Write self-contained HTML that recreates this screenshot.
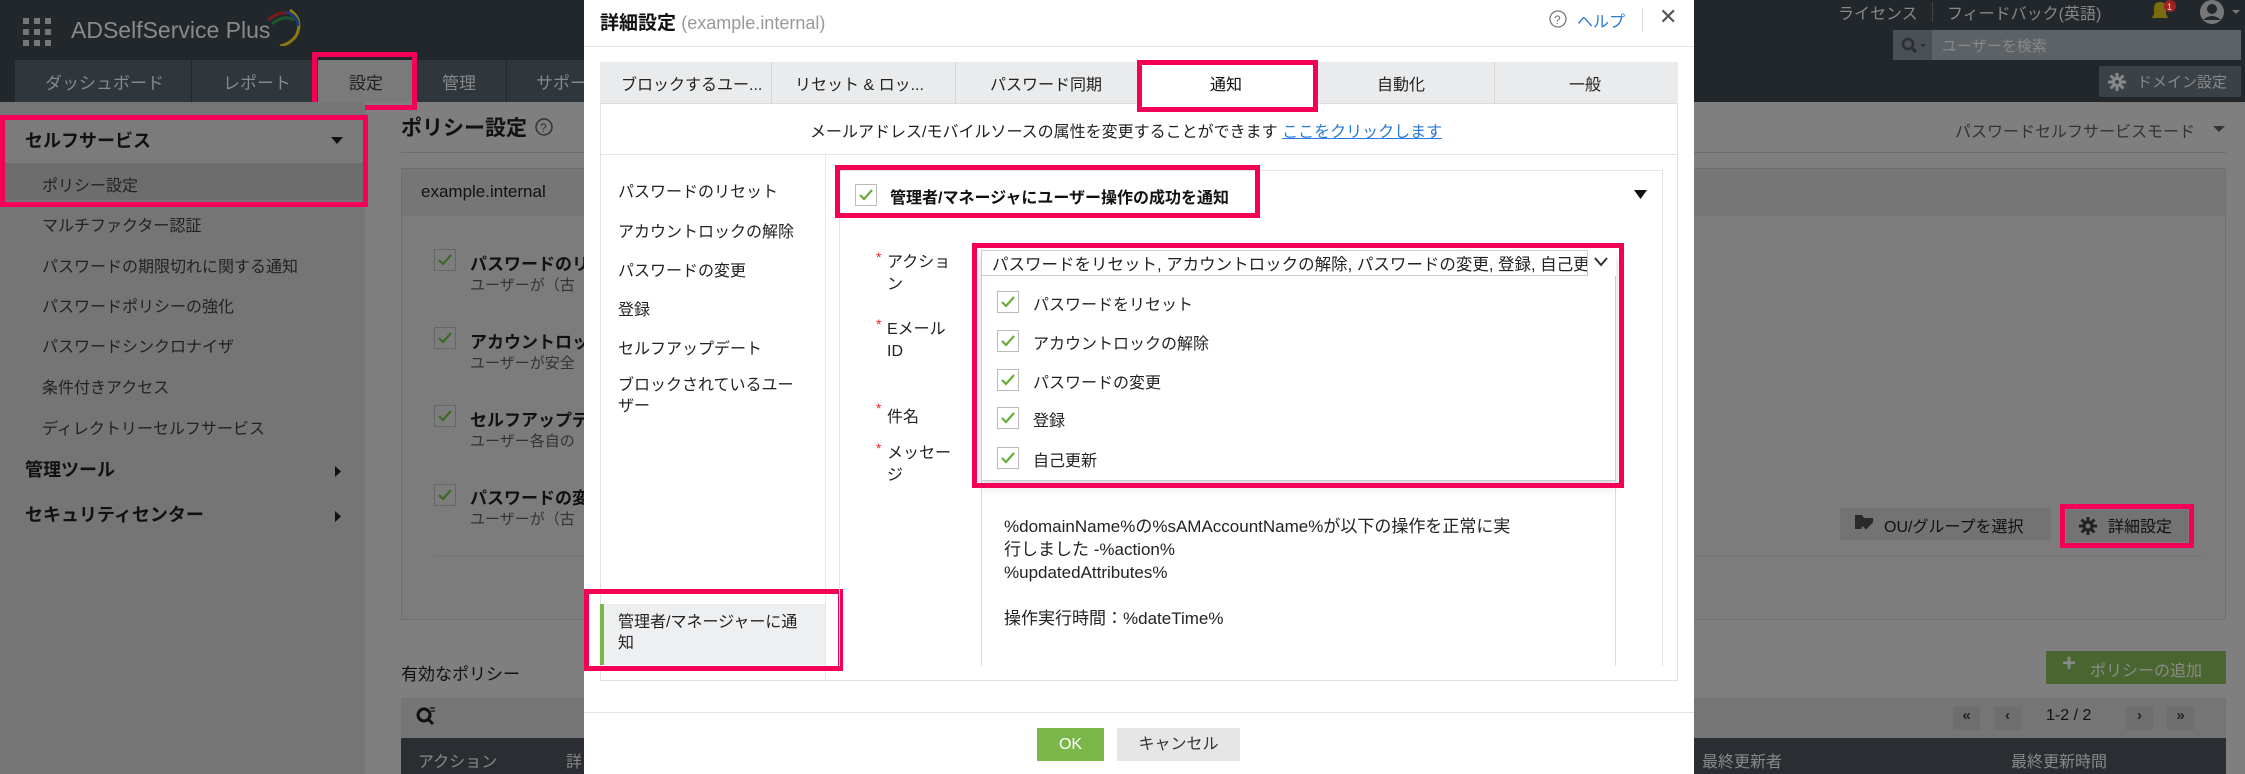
<!DOCTYPE html>
<html><head><meta charset="utf-8"><style>
*{box-sizing:border-box;margin:0;padding:0}
body{width:2245px;height:774px;overflow:hidden;position:relative;background:#7f7f7f;font-family:"Liberation Sans","Noto Sans CJK JP",sans-serif;color:#111}
.a{position:absolute;white-space:nowrap}
.pk{position:absolute;border:5px solid #f50057}
.cb{position:absolute;width:22px;height:22px;border:1.5px solid #bbb;background:#fff}
.cb svg{position:absolute;left:2px;top:2px}
.cbd{position:absolute;width:22px;height:22px;border:1.5px solid #666;background:#7d7d7d}
.cbd svg{position:absolute;left:2px;top:2px}
</style></head><body>
<!-- header -->
<div class="a" style="left:0;top:0;width:2245px;height:102px;background:#22272c"></div>
<svg class="a" style="left:23px;top:18px" width="28" height="28"><g fill="#777"><rect x="0" y="0" width="6" height="6"/><rect x="11" y="0" width="6" height="6"/><rect x="22" y="0" width="6" height="6"/><rect x="0" y="11" width="6" height="6"/><rect x="11" y="11" width="6" height="6"/><rect x="22" y="11" width="6" height="6"/><rect x="0" y="22" width="6" height="6"/><rect x="11" y="22" width="6" height="6"/><rect x="22" y="22" width="6" height="6"/></g></svg>
<div class="a" style="left:71px;top:17px;font-size:23px;color:#8a8a8a">ADSelfService Plus</div>
<svg class="a" style="left:262px;top:6px" width="42" height="40"><path d="M6 14 Q20 2 34 10" stroke="#7a1a1a" stroke-width="3" fill="none"/><path d="M10 18 Q22 8 32 14" stroke="#1a5a2a" stroke-width="3" fill="none"/><path d="M28 4 Q42 14 34 30 Q28 38 18 40" stroke="#8a7a10" stroke-width="3" fill="none"/><path d="M24 6 Q36 10 36 20" stroke="#1a3a7a" stroke-width="3" fill="none"/></svg>
<div class="a" style="left:15px;top:60px;width:1300px;height:42px;background:#2f363c"></div>
<div class="a" style="left:191px;top:60px;width:1px;height:42px;background:#22272c"></div>
<div class="a" style="left:312px;top:60px;width:1px;height:42px;background:#22272c"></div>
<div class="a" style="left:412px;top:60px;width:1px;height:42px;background:#22272c"></div>
<div class="a" style="left:506px;top:60px;width:1px;height:42px;background:#22272c"></div>
<div class="a" style="left:318px;top:60px;width:94px;height:42px;background:#7a7a7a"></div>
<div class="a" style="left:45px;top:69px;font-size:17px;color:#888">ダッシュボード</div>
<div class="a" style="left:223px;top:69px;font-size:17px;color:#888">レポート</div>
<div class="a" style="left:349px;top:69px;font-size:17px;color:#222">設定</div>
<div class="a" style="left:442px;top:69px;font-size:17px;color:#888">管理</div>
<div class="a" style="left:536px;top:69px;font-size:17px;color:#888">サポート</div>
<div class="pk" style="left:312px;top:52px;width:105px;height:58px"></div>
<!-- right header -->
<div class="a" style="left:1838px;top:0px;font-size:16px;color:#888">ライセンス</div>
<div class="a" style="left:1932px;top:2px;width:1px;height:20px;background:#444"></div>
<div class="a" style="left:1947px;top:0px;font-size:16px;color:#888">フィードバック(英語)</div>
<svg class="a" style="left:2148px;top:0" width="30" height="22"><path d="M4 18 H20 L18 14 V8 Q18 2 12 2 Q6 2 6 8 V14 Z" fill="#7a6a10"/><circle cx="22" cy="6" r="6" fill="#a02020"/><text x="19" y="10" font-size="9" fill="#ddd" font-family="Liberation Sans">1</text></svg>
<svg class="a" style="left:2199px;top:0" width="46" height="26"><circle cx="13" cy="12" r="12" fill="#777"/><circle cx="13" cy="9" r="5" fill="#22272c"/><path d="M4 20 Q13 12 22 20" fill="#22272c"/><path d="M33 10 L41 10 L37 14Z" fill="#777"/></svg>
<div class="a" style="left:1893px;top:30px;width:348px;height:30px;background:#5c6266"></div>
<div class="a" style="left:1893px;top:30px;width:39px;height:30px;background:#4a5054"></div>
<svg class="a" style="left:1901px;top:37px" width="28" height="16"><circle cx="7" cy="7" r="5" stroke="#2a2e32" stroke-width="2.5" fill="none"/><path d="M11 11 L15 15" stroke="#2a2e32" stroke-width="3"/><path d="M19 7 L25 7 L22 10Z" fill="#2a2e32"/></svg>
<div class="a" style="left:1942px;top:35px;font-size:15px;color:#888">ユーザーを検索</div>
<div class="a" style="left:2099px;top:66px;width:142px;height:31px;background:#3a4248"></div>
<svg class="a" style="left:2107px;top:72px" width="20" height="20"><g stroke="#888" stroke-width="3"><path d="M10 1V19M1 10H19M3.6 3.6L16.4 16.4M16.4 3.6L3.6 16.4"/></g><circle cx="10" cy="10" r="5" fill="#888"/><circle cx="10" cy="10" r="2" fill="#3a4248"/></svg>
<div class="a" style="left:2137px;top:71px;font-size:15px;color:#888">ドメイン設定</div>
<!-- sidebar -->
<div class="a" style="left:0;top:102px;width:365px;height:672px;background:#757575"></div>
<div class="a" style="left:0;top:120px;width:365px;height:43px;background:#7b7b7b"></div>
<div class="a" style="left:0;top:163px;width:365px;height:37px;background:#6d6d6d"></div>
<div class="a" style="left:25px;top:127px;font-size:18px;font-weight:bold;color:#111">セルフサービス</div>
<svg class="a" style="left:331px;top:137px" width="12" height="8"><path d="M0 0H12L6 7Z" fill="#111"/></svg>
<div class="a" style="left:42px;top:172px;font-size:16px;color:#222">ポリシー設定</div>
<div class="pk" style="left:0;top:115px;width:368px;height:92px"></div>
<div class="a" style="left:42px;top:212px;font-size:16px;color:#222">マルチファクター認証</div>
<div class="a" style="left:42px;top:253px;font-size:16px;color:#222">パスワードの期限切れに関する通知</div>
<div class="a" style="left:42px;top:293px;font-size:16px;color:#222">パスワードポリシーの強化</div>
<div class="a" style="left:42px;top:333px;font-size:16px;color:#222">パスワードシンクロナイザ</div>
<div class="a" style="left:42px;top:374px;font-size:16px;color:#222">条件付きアクセス</div>
<div class="a" style="left:42px;top:415px;font-size:16px;color:#222">ディレクトリーセルフサービス</div>
<div class="a" style="left:25px;top:456px;font-size:18px;font-weight:bold;color:#111">管理ツール</div>
<svg class="a" style="left:335px;top:466px" width="7" height="11"><path d="M0 0V11L6 5.5Z" fill="#111"/></svg>
<div class="a" style="left:25px;top:501px;font-size:18px;font-weight:bold;color:#111">セキュリティセンター</div>
<svg class="a" style="left:335px;top:511px" width="7" height="11"><path d="M0 0V11L6 5.5Z" fill="#111"/></svg>
<!-- main -->
<div class="a" style="left:401px;top:112px;font-size:21px;font-weight:bold;color:#111">ポリシー設定</div>
<svg class="a" style="left:535px;top:118px" width="18" height="18"><circle cx="9" cy="9" r="8" stroke="#333" stroke-width="1.5" fill="none"/><text x="5" y="14" font-size="12" fill="#333" font-family="Liberation Sans">?</text></svg>
<div class="a" style="left:401px;top:152px;width:1825px;height:1px;background:#6e6e6e"></div>
<div class="a" style="left:1955px;top:118px;font-size:16px;color:#333">パスワードセルフサービスモード</div>
<svg class="a" style="left:2213px;top:126px" width="12" height="7"><path d="M0 0H12L6 6Z" fill="#333"/></svg>
<div class="a" style="left:401px;top:168px;width:1825px;height:452px;background:#7c7c7c;border:1px solid #6e6e6e"></div>
<div class="a" style="left:402px;top:169px;width:1823px;height:47px;background:#767676"></div>
<div class="a" style="left:421px;top:182px;font-size:17px;color:#111">example.internal</div>
<div class="cbd" style="left:434px;top:249px"><svg width="16" height="16"><path d="M2 8 L6 12 L14 3" stroke="#3d6b22" stroke-width="2.2" fill="none"/></svg></div>
<div class="a" style="left:470px;top:250px;font-size:17px;font-weight:bold;color:#111">パスワードのリ</div>
<div class="a" style="left:470px;top:274px;font-size:15px;color:#333">ユーザーが（古</div>
<div class="cbd" style="left:434px;top:327px"><svg width="16" height="16"><path d="M2 8 L6 12 L14 3" stroke="#3d6b22" stroke-width="2.2" fill="none"/></svg></div>
<div class="a" style="left:470px;top:328px;font-size:17px;font-weight:bold;color:#111">アカウントロッ</div>
<div class="a" style="left:470px;top:352px;font-size:15px;color:#333">ユーザーが安全</div>
<div class="cbd" style="left:434px;top:405px"><svg width="16" height="16"><path d="M2 8 L6 12 L14 3" stroke="#3d6b22" stroke-width="2.2" fill="none"/></svg></div>
<div class="a" style="left:470px;top:406px;font-size:17px;font-weight:bold;color:#111">セルフアップデ</div>
<div class="a" style="left:470px;top:430px;font-size:15px;color:#333">ユーザー各自の</div>
<div class="cbd" style="left:434px;top:484px"><svg width="16" height="16"><path d="M2 8 L6 12 L14 3" stroke="#3d6b22" stroke-width="2.2" fill="none"/></svg></div>
<div class="a" style="left:470px;top:484px;font-size:17px;font-weight:bold;color:#111">パスワードの変</div>
<div class="a" style="left:470px;top:508px;font-size:15px;color:#333">ユーザーが（古</div>
<div class="a" style="left:434px;top:556px;width:1770px;height:1px;background:#747474"></div>
<div class="a" style="left:1840px;top:508px;width:211px;height:32px;background:#737373"></div>
<svg class="a" style="left:1855px;top:515px" width="20" height="18"><path d="M0 0H7L9 3H18V10L12 16L8 12L6 14H0Z" fill="#2a2a2a"/><path d="M7 12 L11 16 L19 8" stroke="#737373" stroke-width="2" fill="none"/></svg>
<div class="a" style="left:1884px;top:513px;font-size:16px;color:#111">OU/グループを選択</div>
<div class="a" style="left:2066px;top:510px;width:122px;height:32px;background:#737373"></div>
<svg class="a" style="left:2078px;top:516px" width="20" height="20"><g stroke="#222" stroke-width="3"><path d="M10 1V19M1 10H19M3.6 3.6L16.4 16.4M16.4 3.6L3.6 16.4"/></g><circle cx="10" cy="10" r="5.5" fill="#222"/><circle cx="10" cy="10" r="2.5" fill="#737373"/></svg>
<div class="a" style="left:2108px;top:513px;font-size:16px;color:#111">詳細設定</div>
<div class="pk" style="left:2060px;top:504px;width:134px;height:44px"></div>
<div class="a" style="left:401px;top:660px;font-size:17px;color:#111">有効なポリシー</div>
<div class="a" style="left:2046px;top:651px;width:180px;height:33px;background:#4a6630"></div>
<div class="a" style="left:2062px;top:650px;font-size:24px;font-weight:bold;color:#8a8a8a">+</div>
<div class="a" style="left:2090px;top:657px;font-size:16px;color:#8a8a8a">ポリシーの追加</div>
<div class="a" style="left:401px;top:698px;width:1825px;height:40px;background:#757575"></div>
<svg class="a" style="left:416px;top:707px" width="20" height="20"><circle cx="8" cy="8" r="6" stroke="#111" stroke-width="3" fill="none"/><path d="M12 12 L17 17" stroke="#111" stroke-width="3"/><path d="M14 1H19M15 4H19" stroke="#111" stroke-width="1.2"/></svg>
<div class="a" style="left:1953px;top:707px;width:27px;height:23px;background:#6e6e6e;font-size:15px;font-weight:bold;text-align:center;color:#222">«</div>
<div class="a" style="left:1994px;top:707px;width:27px;height:23px;background:#6e6e6e;font-size:15px;font-weight:bold;text-align:center;color:#222">‹</div>
<div class="a" style="left:2046px;top:707px;font-size:16px;color:#111">1-2 / 2</div>
<div class="a" style="left:2126px;top:707px;width:27px;height:23px;background:#6e6e6e;font-size:15px;font-weight:bold;text-align:center;color:#222">›</div>
<div class="a" style="left:2167px;top:707px;width:27px;height:23px;background:#6e6e6e;font-size:15px;font-weight:bold;text-align:center;color:#222">»</div>
<div class="a" style="left:401px;top:738px;width:1825px;height:36px;background:#2a2e32"></div>
<div class="a" style="left:418px;top:748px;font-size:16px;color:#888">アクション</div>
<div class="a" style="left:566px;top:748px;font-size:16px;color:#888">詳</div>
<div class="a" style="left:1702px;top:748px;font-size:16px;color:#888">最終更新者</div>
<div class="a" style="left:2011px;top:748px;font-size:16px;color:#888">最終更新時間</div>
<!-- dialog -->
<div class="a" style="left:584px;top:0;width:1110px;height:774px;background:#fff"></div>
<div class="a" style="left:600px;top:8px;font-size:19px;font-weight:bold;color:#111">詳細設定 <span style="font-weight:normal;color:#999;font-size:18px">(example.internal)</span></div>
<svg class="a" style="left:1549px;top:10px" width="18" height="18"><circle cx="9" cy="9" r="8" stroke="#777" stroke-width="1.3" fill="none"/><text x="5" y="14" font-size="12" fill="#777" font-family="Liberation Sans">?</text></svg>
<div class="a" style="left:1577px;top:8px;font-size:16px;color:#2a7ad8">ヘルプ</div>
<div class="a" style="left:1642px;top:8px;width:1px;height:24px;background:#ddd"></div>
<div class="a" style="left:1659px;top:4px;font-size:22px;color:#555">✕</div>
<div class="a" style="left:584px;top:46px;width:1110px;height:1px;background:#e4e4e4"></div>
<div class="a" style="left:600px;top:62px;width:1078px;height:619px;border:1px solid #e2e2e2"></div>
<div class="a" style="left:600px;top:62px;width:1078px;height:42px;background:#e9ebec;border-bottom:1px solid #ddd"></div>
<div class="a" style="left:1137px;top:62px;width:181px;height:43px;background:#fff"></div>
<div class="a" style="left:771px;top:62px;width:1px;height:42px;background:#d6d6d6"></div>
<div class="a" style="left:955px;top:62px;width:1px;height:42px;background:#d6d6d6"></div>
<div class="a" style="left:1494px;top:62px;width:1px;height:42px;background:#d6d6d6"></div>
<div class="a" style="left:621px;top:71px;font-size:16px;color:#222">ブロックするユー...</div>
<div class="a" style="left:795px;top:71px;font-size:16px;color:#222">リセット &amp; ロッ...</div>
<div class="a" style="left:990px;top:71px;font-size:16px;color:#222">パスワード同期</div>
<div class="a" style="left:1210px;top:71px;font-size:16px;color:#111">通知</div>
<div class="a" style="left:1377px;top:71px;font-size:16px;color:#222">自動化</div>
<div class="a" style="left:1569px;top:71px;font-size:16px;color:#222">一般</div>
<div class="pk" style="left:1137px;top:60px;width:181px;height:52px"></div>
<div class="a" style="left:810px;top:118px;font-size:16px;color:#222">メールアドレス/モバイルソースの属性を変更することができます <span style="color:#2a7ad8;text-decoration:underline">ここをクリックします</span></div>
<div class="a" style="left:601px;top:154px;width:1076px;height:1px;background:#e4e4e4"></div>
<div class="a" style="left:825px;top:155px;width:1px;height:526px;background:#e8e8e8"></div>
<div class="a" style="left:618px;top:178px;font-size:16px;color:#222">パスワードのリセット</div>
<div class="a" style="left:618px;top:218px;font-size:16px;color:#222">アカウントロックの解除</div>
<div class="a" style="left:618px;top:257px;font-size:16px;color:#222">パスワードの変更</div>
<div class="a" style="left:618px;top:296px;font-size:16px;color:#222">登録</div>
<div class="a" style="left:618px;top:335px;font-size:16px;color:#222">セルフアップデート</div>
<div class="a" style="left:618px;top:375px;font-size:16px;color:#222;line-height:21px;white-space:normal;width:182px">ブロックされているユーザー</div>
<div class="a" style="left:600px;top:604px;width:225px;height:61px;background:#eeeff0;border-left:4px solid #7ab648"></div>
<div class="a" style="left:618px;top:612px;font-size:16px;color:#222;line-height:21px;white-space:normal;width:190px">管理者/マネージャーに通知</div>
<div class="pk" style="left:584px;top:589px;width:259px;height:82px"></div>
<div class="a" style="left:839px;top:170px;width:824px;height:496px;border:1px solid #e4e4e4;border-bottom:none"></div>
<div class="cb" style="left:855px;top:184px"><svg width="16" height="16"><path d="M2 8 L6 12 L14 3" stroke="#6aac3a" stroke-width="2.2" fill="none"/></svg></div>
<div class="a" style="left:890px;top:184px;font-size:16px;font-weight:bold;color:#111">管理者/マネージャにユーザー操作の成功を通知</div>
<div class="pk" style="left:835px;top:165px;width:425px;height:53px"></div>
<svg class="a" style="left:1634px;top:190px" width="13" height="10"><path d="M0 0H13L6.5 9Z" fill="#111"/></svg>
<div class="a" style="left:876px;top:249px;color:#e22;font-size:14px">*</div>
<div class="a" style="left:887px;top:252px;font-size:16px;color:#222;line-height:22px">アクショ<br>ン</div>
<div class="a" style="left:876px;top:316px;color:#e22;font-size:14px">*</div>
<div class="a" style="left:887px;top:319px;font-size:16px;color:#222;line-height:22px">Eメール<br>ID</div>
<div class="a" style="left:876px;top:400px;color:#e22;font-size:14px">*</div>
<div class="a" style="left:887px;top:403px;font-size:16px;color:#222">件名</div>
<div class="a" style="left:876px;top:440px;color:#e22;font-size:14px">*</div>
<div class="a" style="left:887px;top:443px;font-size:16px;color:#222;line-height:22px">メッセー<br>ジ</div>
<!-- textarea -->
<div class="a" style="left:981px;top:481px;width:635px;height:185px;border-left:1px solid #ddd;border-right:1px solid #ddd"></div>
<div class="a" style="left:1004px;top:515px;font-size:17px;color:#222;line-height:23px">%domainName%の%sAMAccountName%が以下の操作を正常に実<br>行しました -%action%<br>%updatedAttributes%<br><br>操作実行時間：%dateTime%</div>
<!-- select + dropdown -->
<div class="a" style="left:981px;top:250px;width:635px;height:231px;background:#fff;border:1px solid #ccc;box-shadow:0 6px 10px rgba(0,0,0,0.15)"></div>
<div class="a" style="left:981px;top:250px;width:635px;height:26px;border-bottom:1px solid #ccc;overflow:hidden"></div>
<div class="a" style="left:992px;top:251px;width:595px;overflow:hidden;font-size:16.5px;color:#222">パスワードをリセット, アカウントロックの解除, パスワードの変更, 登録, 自己更新</div>
<div class="a" style="left:1587px;top:250px;width:29px;height:26px;background:#fff;border-left:1px solid #ccc"></div>
<svg class="a" style="left:1594px;top:257px" width="14" height="10"><path d="M1 1 L7 8 L13 1" stroke="#333" stroke-width="2" fill="none"/></svg>
<div class="cb" style="left:997px;top:291px"><svg width="16" height="16"><path d="M2 8 L6 12 L14 3" stroke="#6aac3a" stroke-width="2.2" fill="none"/></svg></div>
<div class="a" style="left:1033px;top:291px;font-size:16px;color:#222">パスワードをリセット</div>
<div class="cb" style="left:997px;top:330px"><svg width="16" height="16"><path d="M2 8 L6 12 L14 3" stroke="#6aac3a" stroke-width="2.2" fill="none"/></svg></div>
<div class="a" style="left:1033px;top:330px;font-size:16px;color:#222">アカウントロックの解除</div>
<div class="cb" style="left:997px;top:369px"><svg width="16" height="16"><path d="M2 8 L6 12 L14 3" stroke="#6aac3a" stroke-width="2.2" fill="none"/></svg></div>
<div class="a" style="left:1033px;top:369px;font-size:16px;color:#222">パスワードの変更</div>
<div class="cb" style="left:997px;top:407px"><svg width="16" height="16"><path d="M2 8 L6 12 L14 3" stroke="#6aac3a" stroke-width="2.2" fill="none"/></svg></div>
<div class="a" style="left:1033px;top:407px;font-size:16px;color:#222">登録</div>
<div class="cb" style="left:997px;top:447px"><svg width="16" height="16"><path d="M2 8 L6 12 L14 3" stroke="#6aac3a" stroke-width="2.2" fill="none"/></svg></div>
<div class="a" style="left:1033px;top:447px;font-size:16px;color:#222">自己更新</div>
<div class="pk" style="left:972px;top:243px;width:652px;height:245px"></div>
<!-- footer -->
<div class="a" style="left:584px;top:712px;width:1110px;height:1px;background:#e4e4e4"></div>
<div class="a" style="left:1037px;top:728px;width:67px;height:33px;background:#7ab648;color:#fff;font-size:16px;text-align:center;line-height:33px">OK</div>
<div class="a" style="left:1117px;top:728px;width:123px;height:33px;background:#e6e6e6;color:#333;font-size:16px;text-align:center;line-height:33px">キャンセル</div>
</body></html>
